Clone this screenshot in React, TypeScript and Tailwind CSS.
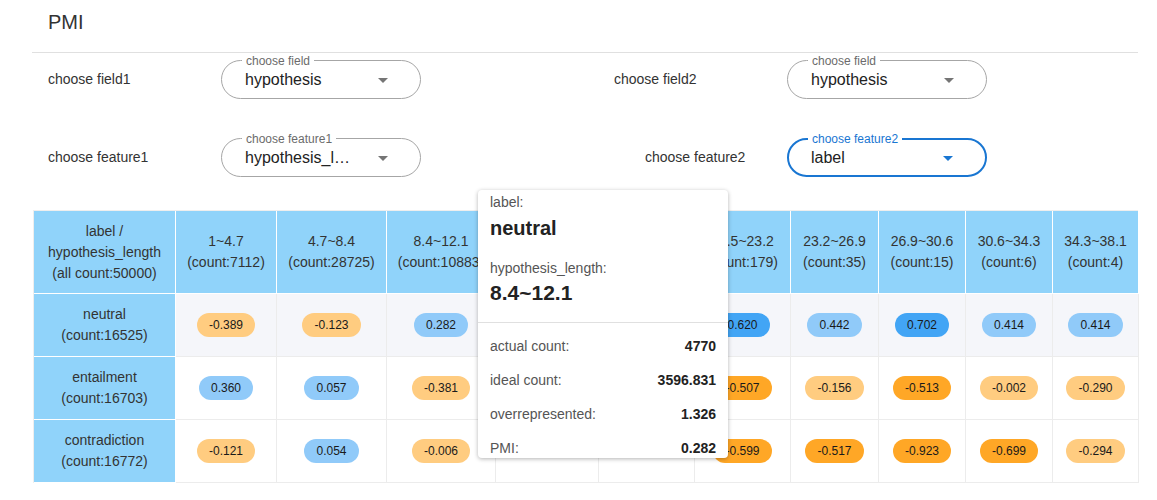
import React from "react";

type Col = { range: string; count: number; w: number };

const cols: Col[] = [
  { range: "1~4.7", count: 7112, w: 101 },
  { range: "4.7~8.4", count: 28725, w: 110 },
  { range: "8.4~12.1", count: 10883, w: 109 },
  { range: "12.1~15.8", count: 2460, w: 103 },
  { range: "15.8~19.5", count: 581, w: 96 },
  { range: "19.5~23.2", count: 179, w: 96 },
  { range: "23.2~26.9", count: 35, w: 88 },
  { range: "26.9~30.6", count: 15, w: 87 },
  { range: "30.6~34.3", count: 6, w: 87 },
  { range: "34.3~38.1", count: 4, w: 86 },
];

const rows: { name: string; count: number; vals: (number | null)[] }[] = [
  { name: "neutral", count: 16525, vals: [-0.389, -0.123, 0.282, 0.312, 0.455, 0.62, 0.442, 0.702, 0.414, 0.414] },
  { name: "entailment", count: 16703, vals: [0.36, 0.057, -0.381, -0.402, -0.478, -0.507, -0.156, -0.513, -0.002, -0.29] },
  { name: "contradiction", count: 16772, vals: [-0.121, 0.054, -0.006, null, null, -0.599, -0.517, -0.923, -0.699, -0.294] },
];

function pillClass(v: number) {
  if (v >= 0) return Math.abs(v) > 0.5 ? "bg-[#42a5f5]" : "bg-[#90caf9]";
  return Math.abs(v) > 0.5 ? "bg-[#ffa726]" : "bg-[#ffcc80]";
}

function Arrow({ color }: { color: string }) {
  return (
    <svg width="24" height="24" viewBox="0 0 24 24" className="absolute right-[25px] top-1/2 -translate-y-1/2">
      <path d="M7 10l5 5 5-5z" fill={color} />
    </svg>
  );
}

function Select({ label, value, focused }: { label: string; value: string; focused?: boolean }) {
  return (
    <div
      className={
        "relative w-[200px] h-[39px] rounded-[20px] flex items-center " +
        (focused ? "border-2 border-[#1976d2] pl-[22px]" : "border border-[#a6a6a6] pl-[23px]")
      }
    >
      <span
        className={
          "absolute px-[4px] bg-white text-[12px] leading-[16px] " +
          (focused ? "left-[19px] top-[-9px] text-[#1976d2]" : "left-[20px] top-[-8px] text-[#6b6b6b]")
        }
      >
        {label}
      </span>
      <span className="text-[16px] text-[#222] leading-[20px] whitespace-nowrap pt-px">{value}</span>
      <Arrow color={focused ? "#1976d2" : "#757575"} />
    </div>
  );
}

export default function App() {
  const font = { fontFamily: '"Liberation Sans", Arial, sans-serif' };
  return (
    <div className="relative w-[1157px] h-[500px] bg-white overflow-hidden text-[#333]" style={font}>
      <div className="ml-[32px] w-[1106px]">
        <div className="h-[52px] pl-[16px] pt-[8px] text-[20px] leading-[28px] text-[#333]">PMI</div>
        <div className="h-px bg-[#e0e0e0]" />

        <div className="mt-[7px] flex items-center h-[39px]">
          <div className="w-[189px] pl-[16px] text-[14px]">choose field1</div>
          <Select label="choose field" value="hypothesis" />
          <div className="w-[366px] pl-[193px] text-[14px]">choose field2</div>
          <Select label="choose field" value="hypothesis" />
        </div>

        <div className="mt-[39px] flex items-center h-[39px]">
          <div className="w-[189px] pl-[16px] text-[14px]">choose feature1</div>
          <Select label="choose feature1" value="hypothesis_l…" />
          <div className="w-[366px] pl-[224px] text-[14px]">choose feature2</div>
          <Select label="choose feature2" value="label" focused />
        </div>

        <div className="mt-[33px] ml-px w-[1105px] border-t border-l border-[#eeeeee]">
          <div className="flex h-[83px]">
            <div className="w-[142px] shrink-0 bg-[#90d3fa] border-r border-b border-white flex flex-col items-center justify-center text-[14px] leading-[21px] text-center">
              <div>label /</div>
              <div>hypothesis_length</div>
              <div>(all count:50000)</div>
            </div>
            {cols.map((c) => (
              <div
                key={c.range}
                style={{ width: c.w }}
                className="shrink-0 bg-[#90d3fa] border-r border-b border-white flex flex-col items-center justify-center text-[14px] leading-[21px] text-center whitespace-nowrap overflow-hidden"
              >
                <div>{c.range}</div>
                <div>(count:{c.count})</div>
              </div>
            ))}
          </div>
          {rows.map((r, ri) => (
            <div key={r.name} className={"flex h-[63px] " + (ri === 0 ? "bg-[#f5f6fa]" : "bg-white")}>
              <div className="w-[142px] shrink-0 bg-[#90d3fa] border-r border-b border-white flex flex-col items-center justify-center text-[14px] leading-[21px] text-center">
                <div>{r.name}</div>
                <div>(count:{r.count})</div>
              </div>
              {r.vals.map((v, i) => (
                <div
                  key={i}
                  style={{ width: cols[i].w }}
                  className="shrink-0 border-r border-b border-[#ececec] flex items-center justify-center"
                >
                  {v !== null && (
                    <span className={"h-[24px] px-[12px] rounded-full flex items-center text-[12px] text-[#1a1a1a] " + pillClass(v)}>
                      {v.toFixed(3)}
                    </span>
                  )}
                </div>
              ))}
            </div>
          ))}
        </div>
      </div>

      <div className="absolute left-[478px] top-[190px] w-[250px] h-[268px] bg-white rounded-[4px] shadow-[0_1px_4px_rgba(0,0,0,0.3)] overflow-hidden">
        <div className="px-[12px]">
          <div className="h-[24px] leading-[24px] text-[14px] text-[#555]">label:</div>
          <div className="h-[28px] leading-[28px] text-[20px] font-bold text-[#222]">neutral</div>
          <div className="mt-[14px] h-[24px] leading-[24px] text-[14px] text-[#555]">hypothesis_length:</div>
          <div className="h-[26px] leading-[26px] text-[21px] font-bold text-[#222]">8.4~12.1</div>
        </div>
        <div className="mt-[16px] h-px bg-[#e0e0e0]" />
        <div className="pt-[6px] px-[12px]">
          {[
            ["actual count:", "4770"],
            ["ideal count:", "3596.831"],
            ["overrepresented:", "1.326"],
            ["PMI:", "0.282"],
          ].map(([k, v]) => (
            <div key={k} className="h-[34px] flex items-center justify-between text-[14px]">
              <span className="text-[#555]">{k}</span>
              <span className="font-bold text-[#222]">{v}</span>
            </div>
          ))}
        </div>
      </div>
    </div>
  );
}
